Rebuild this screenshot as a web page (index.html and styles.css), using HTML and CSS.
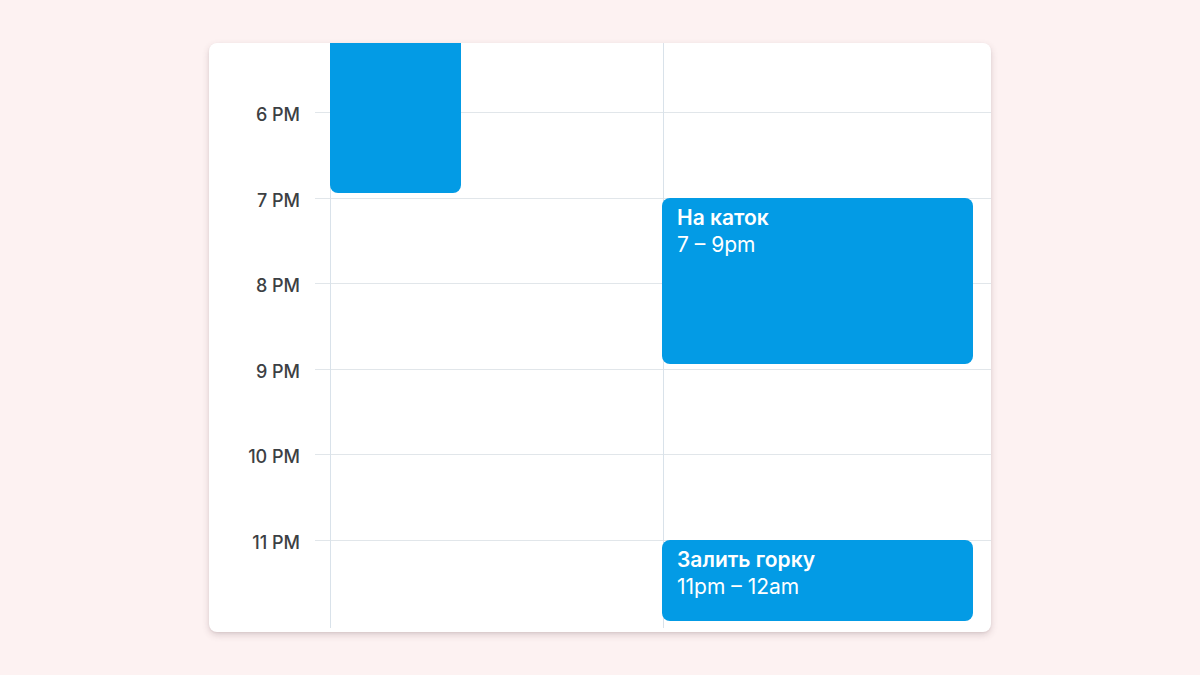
FILE: index.html
```html
<!DOCTYPE html>
<html lang="ru">
<head>
<meta charset="utf-8">
<title>Calendar</title>
<link rel="stylesheet" href="styles.css">
</head>
<body>
<div class="card">
  <div class="rows">
    <div class="row first"><div class="label"></div><div class="lane"></div></div>
    <div class="row"><div class="label">6 PM</div><div class="lane"></div></div>
    <div class="row"><div class="label">7 PM</div><div class="lane"></div></div>
    <div class="row"><div class="label">8 PM</div><div class="lane"></div></div>
    <div class="row"><div class="label">9 PM</div><div class="lane"></div></div>
    <div class="row"><div class="label">10 PM</div><div class="lane"></div></div>
    <div class="row"><div class="label">11 PM</div><div class="lane"></div></div>
  </div>
  <div class="days">
    <div class="day day1">
      <div class="event ev-top"></div>
    </div>
    <div class="day day2">
      <div class="event ev-skate">
        <div class="ev-title">На каток</div>
        <div class="ev-time">7 – 9pm</div>
      </div>
      <div class="event ev-hill">
        <div class="ev-title">Залить горку</div>
        <div class="ev-time">11pm – 12am</div>
      </div>
    </div>
  </div>
</div>
</body>
</html>
```
FILE: styles.css
```css
* { box-sizing: border-box; }
html, body { margin: 0; padding: 0; }
body {
  height: 675px;
  background: #fdf2f2;
  display: flex;
  align-items: center;
  justify-content: center;
  font-family: Inter, "Open Sans", "Liberation Sans", sans-serif;
}
.card {
  position: relative;
  width: 782px;
  height: 589px;
  background: #ffffff;
  border-radius: 8px;
  overflow: hidden;
  box-shadow: 0 3px 7px rgba(90, 60, 70, 0.2), 0 1px 2px rgba(90, 60, 70, 0.08);
}
.rows {
  display: flex;
  flex-direction: column;
}
.row {
  display: grid;
  grid-template-columns: 106px 1fr;
  height: 85.6px;
}
.row.first { height: 69px; }
.label {
  text-align: right;
  padding-right: 15px;
  margin-top: -8px;
  height: 22px;
  line-height: 22px;
  font-size: 18px;
  font-weight: 500;
  color: #3c4043;
}
.row.first .label { margin-top: 0; }
.lane { border-top: 1px solid #e1e6ea; }
.row.first .lane { border-top: none; }
.days {
  position: absolute;
  top: 0;
  left: 121px;
  right: 0;
  bottom: 4px;
  display: grid;
  grid-template-columns: 333px 1fr;
}
.day {
  position: relative;
  border-left: 1px solid #d9e2ea;
}
.event {
  position: absolute;
  background: #039be5;
  border-radius: 8px;
  color: #ffffff;
  padding: 6px 15px;
}
.ev-top {
  left: -1px;
  top: -10px;
  width: 131px;
  height: 160px;
}
.ev-skate {
  left: -2px;
  top: 155px;
  width: 311px;
  height: 166px;
}
.ev-hill {
  left: -2px;
  top: 497px;
  width: 311px;
  height: 81px;
}
.ev-title {
  font-size: 21px;
  font-weight: 600;
  line-height: 27px;
}
.ev-time {
  font-size: 21px;
  font-weight: 400;
  line-height: 27px;
}
```
